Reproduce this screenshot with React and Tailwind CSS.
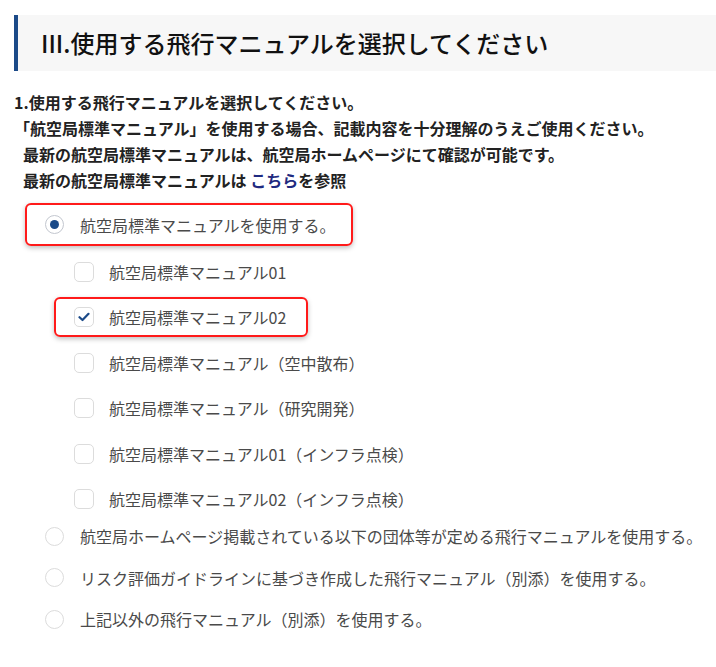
import React from 'react'

const CHECK_OPTIONS = [
    { label: '航空局標準マニュアル01', checked: false },
    { label: '航空局標準マニュアル02', checked: true },
    { label: '航空局標準マニュアル（空中散布）', checked: false },
    { label: '航空局標準マニュアル（研究開発）', checked: false },
    { label: '航空局標準マニュアル01（インフラ点検）', checked: false },
    { label: '航空局標準マニュアル02（インフラ点検）', checked: false },
]

const OTHER_OPTIONS = [
    '航空局ホームページ掲載されている以下の団体等が定める飛行マニュアルを使用する。',
    'リスク評価ガイドラインに基づき作成した飛行マニュアル（別添）を使用する。',
    '上記以外の飛行マニュアル（別添）を使用する。',
]

function Radio({ selected }) {
    return (
        <span
            className={`flex h-[19px] w-[19px] shrink-0 items-center justify-center rounded-full border-[1.5px] bg-white ${
                selected ? 'border-[#c3c7cf]' : 'border-[#dcdcdc]'
            }`}
        >
            {selected && <span className="h-[9px] w-[9px] rounded-full bg-[#1b4a88]" />}
        </span>
    )
}

function Checkbox({ checked }) {
    return (
        <span className="flex h-[20px] w-[20px] shrink-0 items-center justify-center rounded-[5px] border-[1.5px] border-[#dcdcdc] bg-white">
            {checked && (
                <svg width="12" height="10" viewBox="0 0 12 10">
                    <path d="M1.5 5.2 L4.5 8 L10.5 1.8" fill="none" stroke="#1b4a88" strokeWidth="2.2" strokeLinecap="round" strokeLinejoin="round" />
                </svg>
            )}
        </span>
    )
}

function App() {
    return (
        <div
            className="min-h-screen w-full bg-white pl-[14px] pt-[15px] text-[#222]"
            style={{ fontFamily: '"Noto Sans CJK JP", "Noto Sans", sans-serif' }}
        >
            {/* Section header */}
            <div className="flex h-[56px] items-center border-l-4 border-[#1b4a88] bg-[#f7f7f7] pl-[23px]">
                <h2 className="text-[24px] font-medium leading-none text-[#111]">III.使用する飛行マニュアルを選択してください</h2>
            </div>

            {/* Description */}
            <div className="mt-[18px] text-[16px] font-bold leading-[26px] text-[#222]">
                <p>1.使用する飛行マニュアルを選択してください。</p>
                <p>「航空局標準マニュアル」を使用する場合、記載内容を十分理解のうえご使用ください。</p>
                <p className="pl-[9px]">最新の航空局標準マニュアルは、航空局ホームページにて確認が可能です。</p>
                <p className="pl-[9px]">
                    最新の航空局標準マニュアルは <span className="text-[#1f2a80]">こちら</span>を参照
                </p>
            </div>

            {/* Options */}
            <div className="mt-[10px] text-[16px] text-[#4a4a4a]">
                <div className="ml-[11px] inline-flex h-[43px] items-center gap-4 rounded-md border-2 border-[#ff1a1a] pl-[18px] pr-[15px] shadow-[0_2px_5px_rgba(0,0,0,0.25)]">
                    <Radio selected />
                    <span>航空局標準マニュアルを使用する。</span>
                </div>

                <div className="mt-[3px] flex flex-col">
                    {CHECK_OPTIONS.map((opt) => (
                        <div key={opt.label} className="flex h-[45.5px] items-center">
                            <div
                                className={`ml-[40px] flex h-[40px] items-center gap-[15px] rounded-md border-2 pl-[18px] pr-[20px] ${
                                    opt.checked
                                        ? 'border-[#ff1a1a] shadow-[0_2px_5px_rgba(0,0,0,0.25)]'
                                        : 'border-transparent'
                                }`}
                            >
                                <Checkbox checked={opt.checked} />
                                <span>{opt.label}</span>
                            </div>
                        </div>
                    ))}
                </div>

                <div className="flex flex-col gap-[13.5px]">
                    {OTHER_OPTIONS.map((label) => (
                        <div key={label} className="ml-[31px] flex h-[28px] items-center gap-4">
                            <Radio />
                            <span>{label}</span>
                        </div>
                    ))}
                </div>
            </div>
        </div>
    )
}

export default App
